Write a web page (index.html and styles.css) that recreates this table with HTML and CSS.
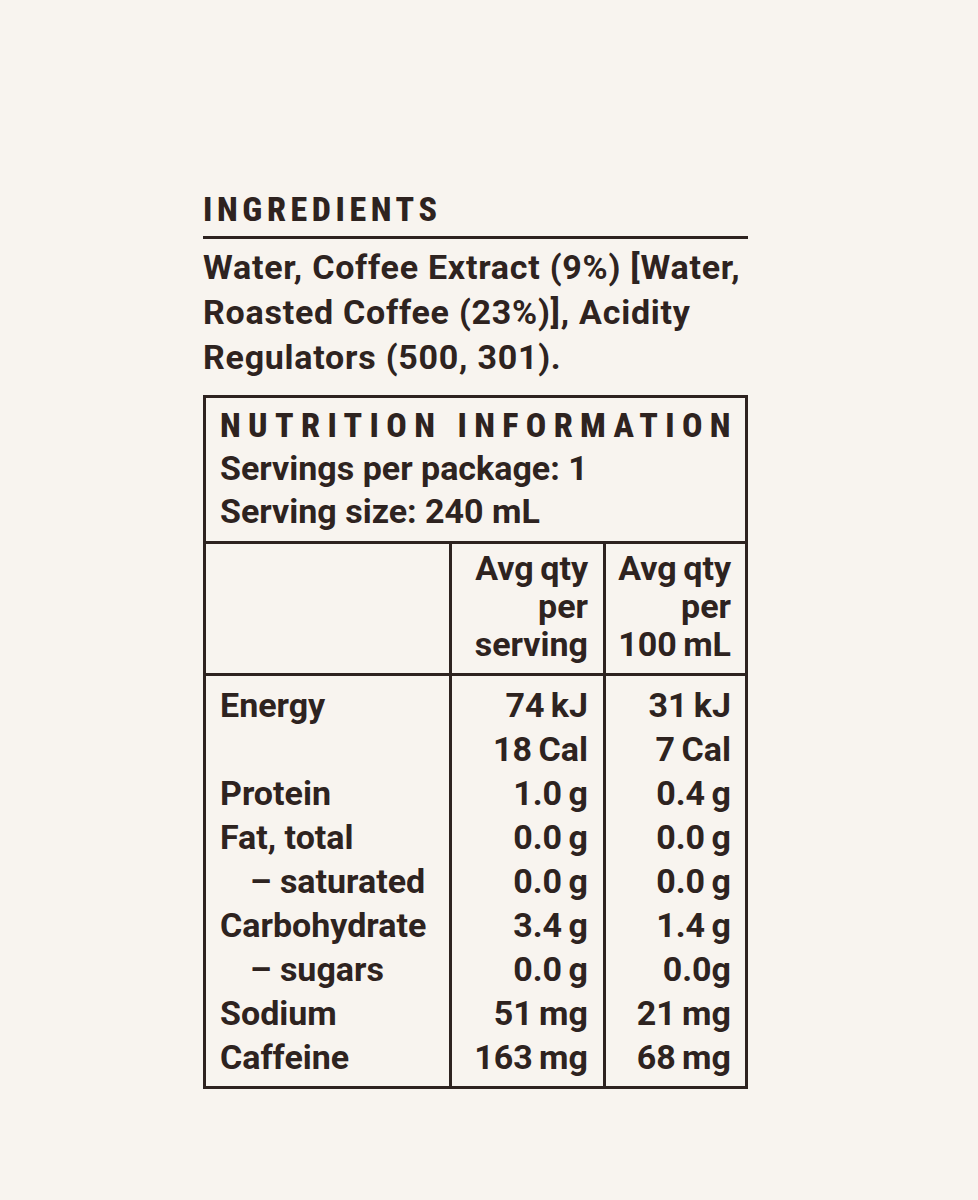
FILE: index.html
```html
<!DOCTYPE html>
<html lang="en">
<head>
<meta charset="utf-8">
<title>Ingredients &amp; Nutrition Information</title>
<link rel="stylesheet" href="styles.css">
</head>
<body>
<main class="label">
  <h2 class="ingredients-title">INGREDIENTS</h2>
  <p class="ingredients-text">Water, Coffee Extract (9%) [Water, Roasted Coffee (23%)], Acidity Regulators (500, 301).</p>

  <section class="facts">
    <header class="facts-head">
      <h2 class="facts-title">NUTRITION INFORMATION</h2>
      <div class="facts-line">Servings per package: 1</div>
      <div class="facts-line">Serving size: 240 mL</div>
    </header>

    <div class="facts-row colhead">
      <div class="cell name"></div>
      <div class="cell val">Avg qty<br>per<br>serving</div>
      <div class="cell val last">Avg qty<br>per<br>100 mL</div>
    </div>

    <div class="facts-body">
      <div class="facts-row first">
        <div class="cell name">Energy</div>
        <div class="cell val">74 kJ</div>
        <div class="cell val last">31 kJ</div>
      </div>
      <div class="facts-row">
        <div class="cell name"></div>
        <div class="cell val">18 Cal</div>
        <div class="cell val last">7 Cal</div>
      </div>
      <div class="facts-row">
        <div class="cell name">Protein</div>
        <div class="cell val">1.0 g</div>
        <div class="cell val last">0.4 g</div>
      </div>
      <div class="facts-row">
        <div class="cell name">Fat, total</div>
        <div class="cell val">0.0 g</div>
        <div class="cell val last">0.0 g</div>
      </div>
      <div class="facts-row">
        <div class="cell name sub">– saturated</div>
        <div class="cell val">0.0 g</div>
        <div class="cell val last">0.0 g</div>
      </div>
      <div class="facts-row">
        <div class="cell name">Carbohydrate</div>
        <div class="cell val">3.4 g</div>
        <div class="cell val last">1.4 g</div>
      </div>
      <div class="facts-row">
        <div class="cell name sub">– sugars</div>
        <div class="cell val">0.0 g</div>
        <div class="cell val last">0.0g</div>
      </div>
      <div class="facts-row">
        <div class="cell name">Sodium</div>
        <div class="cell val">51 mg</div>
        <div class="cell val last">21 mg</div>
      </div>
      <div class="facts-row final">
        <div class="cell name">Caffeine</div>
        <div class="cell val">163 mg</div>
        <div class="cell val last">68 mg</div>
      </div>
    </div>
  </section>
</main>
</body>
</html>
```

FILE: styles.css
```css
html, body {
  margin: 0;
  padding: 0;
  background: #f8f4ef;
}

body {
  color: #2e2320;
  font-family: Roboto, "Liberation Sans", sans-serif;
  font-stretch: 100%;
  font-weight: 700;
  font-size: 34px;
}

.label {
  width: 545px;
  margin-left: 203px;
  padding-top: 192px;
}

.ingredients-title {
  margin: 0;
  font-size: 34px;
  line-height: 34px;
  font-weight: 800;
  font-stretch: 75%;
  letter-spacing: 4.6px;
  padding-bottom: 10px;
  border-bottom: 3px solid #2e2320;
}

.ingredients-text {
  margin: 6px 0 15px;
  line-height: 45px;
  letter-spacing: 0.75px;
}

.facts {
  border: 3px solid #2e2320;
}

.facts-head {
  padding: 6px 12px 8px 14px;
  border-bottom: 3px solid #2e2320;
  line-height: 43px;
}

.facts-title {
  margin: 0;
  font-size: 34px;
  line-height: 43px;
  font-weight: 800;
  font-stretch: 75%;
  letter-spacing: 7.35px;
  white-space: nowrap;
}

.facts-row {
  display: grid;
  grid-template-columns: 243px 154px 1fr;
  line-height: 44px;
}

.colhead {
  line-height: 38px;
  border-bottom: 3px solid #2e2320;
  word-spacing: -4px;
}

.colhead .cell {
  padding-top: 5px;
  padding-bottom: 10px;
}

.cell {
  padding-left: 14px;
}

.cell.val {
  border-left: 3px solid #2e2320;
  text-align: right;
  padding-left: 0;
  padding-right: 15px;
  word-spacing: -2px;
}

.cell.val.last {
  padding-right: 14px;
}

.cell.sub {
  padding-left: 44px;
}

.facts-row.first .cell {
  padding-top: 7px;
}

.facts-row.final .cell {
  padding-bottom: 7px;
}
```
